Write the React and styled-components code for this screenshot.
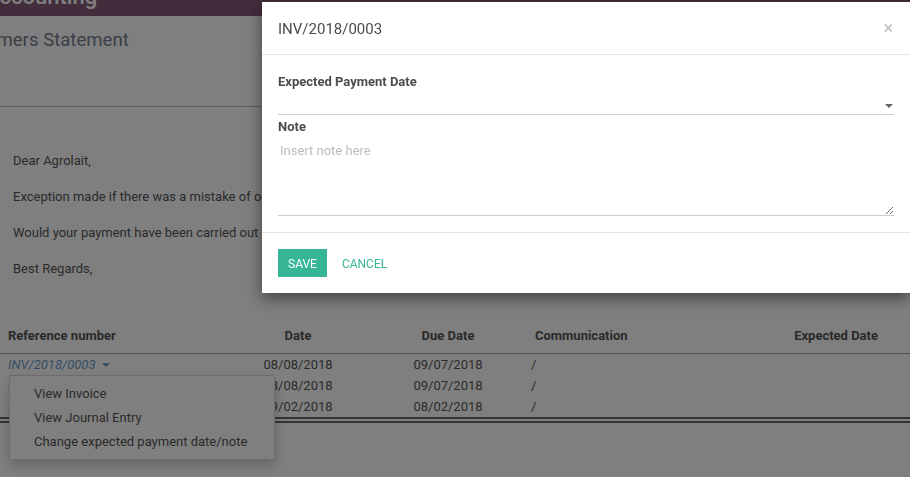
import React from "react";
import styled, { createGlobalStyle } from "styled-components";

const Global = createGlobalStyle`
  html, body { margin: 0; padding: 0; }
  body {
    width: 910px;
    height: 477px;
    overflow: hidden;
    background: #ffffff;
    font-family: Roboto, "Liberation Sans", sans-serif;
    color: #555;
  }
`;

const Page = styled.div`
  width: 910px;
  height: 477px;
  overflow: hidden;
  display: flex;
  flex-direction: column;
  background: #fff;
`;

const Navbar = styled.header`
  height: 16px;
  flex: none;
  background: #875a7b;
  overflow: hidden;
`;

const AppName = styled.div`
  margin: -14px 0 0 -15px;
  font-size: 22px;
  line-height: 22px;
  font-weight: 500;
  color: #ffffff;
  white-space: nowrap;
`;

const ControlPanel = styled.div`
  flex: none;
  border-bottom: 1px solid #bbb;
  padding-top: 14px;
  box-sizing: border-box;
  height: 91px;
`;

const Breadcrumb = styled.div`
  margin-left: -52px;
  font-size: 18.6px;
  line-height: 20px;
  color: #74808e;
  white-space: nowrap;
`;

const Content = styled.main`
  padding-top: 45px;
  display: flex;
  flex-direction: column;
`;

const Letter = styled.div`
  padding-left: 13px;
  display: flex;
  flex-direction: column;
  gap: 18px;
`;

const Para = styled.p`
  margin: 0;
  font-size: 13px;
  line-height: 18px;
  white-space: nowrap;
  color: #555;
`;

const Table = styled.div`
  margin-top: 41px;
  display: flex;
  flex-direction: column;
  border-bottom: 6px double #666;
`;

const Row = styled.div`
  display: grid;
  grid-template-columns: 230px 136px 164px 1fr 170px;
  font-size: 13px;
  line-height: ${(p) => (p.$head ? "18px" : "21px")};
  font-weight: ${(p) => (p.$head ? 700 : 400)};
  color: #555;
  padding: ${(p) => (p.$head ? "8px 0" : "0")};
  border-bottom: ${(p) => (p.$head ? "1px solid #a8a8a8" : "none")};
`;

const Cell = styled.div`
  position: relative;
  white-space: nowrap;
  text-align: ${(p) => p.$align || "left"};
  padding-left: ${(p) => p.$pl || 0}px;
  padding-right: ${(p) => p.$pr || 0}px;
`;

const RefLink = styled.span`
  font-style: italic;
  color: #6a9ccc;
  display: inline-flex;
  align-items: center;
`;

const Caret = styled.span`
  display: inline-block;
  margin-left: 6px;
  width: 0;
  height: 0;
  border-top: 4px solid #6a9ccc;
  border-left: 4px solid transparent;
  border-right: 4px solid transparent;
`;

const Menu = styled.ul`
  position: absolute;
  top: 100%;
  left: 9px;
  z-index: 3;
  width: 266px;
  box-sizing: border-box;
  margin: 0;
  padding: 6px 0 5px 0;
  list-style: none;
  background: #fff;
  border: 1px solid rgba(0, 0, 0, 0.15);
  box-shadow: 0 6px 12px rgba(0, 0, 0, 0.2);
`;

const MenuItem = styled.li`
  padding-left: 24px;
  font-size: 13px;
  line-height: 24px;
  font-style: normal;
  font-weight: 400;
  color: #555;
`;

const Backdrop = styled.div`
  position: fixed;
  inset: 0;
  background: rgba(0, 0, 0, 0.5);
  z-index: 10;
`;

const Modal = styled.div`
  position: fixed;
  top: 2px;
  left: 262px;
  width: 648px;
  z-index: 11;
  background: #fff;
  box-shadow: 0 5px 15px rgba(0, 0, 0, 0.5);
  display: flex;
  flex-direction: column;
`;

const ModalHeader = styled.div`
  display: flex;
  align-items: center;
  justify-content: space-between;
  padding: 16px 16px 14px 16px;
  border-bottom: 1px solid #e5e5e5;
`;

const ModalTitle = styled.h4`
  margin: 0;
  font-size: 15px;
  line-height: 22px;
  font-weight: 400;
  color: #4c4c4c;
`;

const Close = styled.span`
  font-size: 18px;
  line-height: 18px;
  color: #c0c0c0;
  margin-right: 1px;
  margin-top: -3px;
`;

const ModalBody = styled.div`
  padding: 18px 16px 16px 16px;
  display: flex;
  flex-direction: column;
  border-bottom: 1px solid #e5e5e5;
`;

const Label = styled.label`
  font-size: 13px;
  line-height: 18px;
  font-weight: 700;
  color: #4c4c4c;
  margin-top: ${(p) => p.$mt || 0}px;
`;

const SelectBox = styled.div`
  height: 23px;
  border-bottom: 1px solid #ccc;
  display: flex;
  align-items: center;
  justify-content: flex-end;
  padding-right: 1px;
`;

const SelectCaret = styled.span`
  width: 0;
  height: 0;
  margin-top: 6px;
  border-top: 4px solid #666;
  border-left: 4px solid transparent;
  border-right: 4px solid transparent;
`;

const NoteArea = styled.textarea`
  margin-top: 4px;
  height: 76px;
  box-sizing: border-box;
  width: 100%;
  border: none;
  border-bottom: 1px solid #ccc;
  padding: 2px 2px 1px 2px;
  font-family: Roboto, "Liberation Sans", sans-serif;
  font-size: 13px;
  line-height: 18px;
  color: #4c4c4c;
  outline: none;
  resize: vertical;
  &::placeholder { color: #bdbdbd; }
`;

const ModalFooter = styled.div`
  padding: 16px;
  display: flex;
  gap: 6px;
  align-items: center;
`;

const Button = styled.button`
  height: 28px;
  padding: 0 ${(p) => (p.$primary ? 10 : 9)}px;
  border: none;
  border-radius: 0;
  font-family: Roboto, "Liberation Sans", sans-serif;
  font-size: 12px;
  line-height: 30px;
  text-transform: uppercase;
  background: ${(p) => (p.$primary ? "#36b696" : "transparent")};
  color: ${(p) => (p.$primary ? "#fff" : "#36b696")};
  cursor: pointer;
`;

const rows = [
  { ref: "INV/2018/0003", date: "08/08/2018", due: "09/07/2018", menu: true },
  { ref: "INV/2018/0002", date: "08/08/2018", due: "09/07/2018" },
  { ref: "INV/2018/0001", date: "09/02/2018", due: "08/02/2018" },
];

export default function App() {
  return (
    <>
      <Global />
      <Page>
        <Navbar>
          <AppName>Accounting</AppName>
        </Navbar>
        <ControlPanel>
          <Breadcrumb>Customers Statement</Breadcrumb>
        </ControlPanel>
        <Content>
          <Letter>
            <Para>Dear Agrolait,</Para>
            <Para>
              Exception made if there was a mistake of ours, it seems that the following amount stays unpaid.
            </Para>
            <Para>
              Would your payment have been carried out after this mail was sent, please ignore this message.
            </Para>
            <Para>Best Regards,</Para>
          </Letter>
          <Table>
            <Row $head>
              <Cell $pl={8}>Reference number</Cell>
              <Cell $align="center">Date</Cell>
              <Cell $align="center">Due Date</Cell>
              <Cell $pl={5}>Communication</Cell>
              <Cell $align="right" $pr={32}>Expected Date</Cell>
            </Row>
            {rows.map((r) => (
              <Row key={r.ref}>
                <Cell $pl={8}>
                  <RefLink>
                    {r.ref}
                    {r.menu && <Caret />}
                  </RefLink>
                  {r.menu && (
                    <Menu>
                      <MenuItem>View Invoice</MenuItem>
                      <MenuItem>View Journal Entry</MenuItem>
                      <MenuItem>Change expected payment date/note</MenuItem>
                    </Menu>
                  )}
                </Cell>
                <Cell $align="center">{r.date}</Cell>
                <Cell $align="center">{r.due}</Cell>
                <Cell $pl={1}>/</Cell>
                <Cell $align="right" $pr={32}></Cell>
              </Row>
            ))}
          </Table>
        </Content>
      </Page>
      <Backdrop />
      <Modal>
        <ModalHeader>
          <ModalTitle>INV/2018/0003</ModalTitle>
          <Close>×</Close>
        </ModalHeader>
        <ModalBody>
          <Label>Expected Payment Date</Label>
          <SelectBox>
            <SelectCaret />
          </SelectBox>
          <Label $mt={3}>Note</Label>
          <NoteArea placeholder="Insert note here" />
        </ModalBody>
        <ModalFooter>
          <Button $primary>Save</Button>
          <Button>Cancel</Button>
        </ModalFooter>
      </Modal>
    </>
  );
}
